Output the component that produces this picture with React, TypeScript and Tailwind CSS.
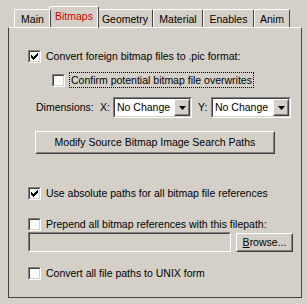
import type { ReactNode } from 'react'

const tabs = ['Main', 'Bitmaps', 'Geometry', 'Material', 'Enables', 'Anim']
const tabWidths = [37, 50, 56, 50, 51, 36]

function CheckBox({ checked }: { checked?: boolean }) {
  return (
    <span className="box-border flex h-[13px] w-[13px] shrink-0 border border-t-[#808080] border-l-[#808080] border-b-white border-r-white">
      <span className="box-border flex flex-1 items-center justify-center border border-t-[#404040] border-l-[#404040] border-b-[#d4d0c8] border-r-[#d4d0c8] bg-white">
        {checked && (
          <svg width="7" height="7" viewBox="0 0 7 7">
            <path d="M0 2h1v1h1v1h1v-1h1v-1h1v-1h1v-1h1v3h-1v1h-1v1h-1v1h-1v1h-1v-1h-1v-1h-1z" fill="#000" />
          </svg>
        )}
      </span>
    </span>
  )
}

function Row({ checked, children, className }: { checked?: boolean; children: ReactNode; className: string }) {
  return (
    <div className={`flex h-[15px] items-center gap-[5px] ${className}`}>
      <CheckBox checked={checked} />
      <span className="whitespace-nowrap">{children}</span>
    </div>
  )
}

function Sunken({ className, children }: { className: string; children?: ReactNode }) {
  return (
    <div className={`box-border flex border border-t-[#808080] border-l-[#808080] border-b-white border-r-white ${className}`}>
      <div className="box-border flex flex-1 items-center border border-t-[#404040] border-l-[#404040] border-b-[#d4d0c8] border-r-[#d4d0c8]">
        {children}
      </div>
    </div>
  )
}

function Raised({ className, children }: { className: string; children?: ReactNode }) {
  return (
    <div className={`box-border flex border border-t-white border-l-white border-b-[#404040] border-r-[#404040] bg-[#d4d0c8] ${className}`}>
      <div className="box-border flex flex-1 items-center justify-center border border-t-[#d4d0c8] border-l-[#d4d0c8] border-b-[#808080] border-r-[#808080]">
        {children}
      </div>
    </div>
  )
}

function Dropdown({ className }: { className: string }) {
  return (
    <Sunken className={`h-[21px] ${className}`}>
      <div className="flex h-full flex-1 items-center bg-white pl-[2px]">No Change</div>
      <Raised className="h-[17px] w-[16px]">
        <svg width="7" height="4" viewBox="0 0 7 4">
          <path d="M0 0h7l-3.5 4z" fill="#000" />
        </svg>
      </Raised>
    </Sunken>
  )
}

export default function App() {
  return (
    <div
      className="h-[304px] w-[307px] overflow-hidden bg-[#d4d0c8] pt-[6px] pl-[8px] text-[10.5px] leading-none text-black"
      style={{ fontFamily: '"Liberation Sans", Arial, sans-serif' }}
    >
      {/* Tabs */}
      <div className="flex h-[21px] items-end pl-[6px]">
        {tabs.map((t, i) => {
          const active = t === 'Bitmaps'
          return (
            <div
              key={t}
              style={{ width: tabWidths[i] }}
              className={`box-border flex items-center justify-center rounded-t-[2px] border-t border-l border-r border-t-white border-l-white border-r-[#404040] ${
                active ? 'relative z-10 -mx-[2px] h-[22px] -mb-px pb-[3px] text-[#d00000]' : 'h-[18px] pt-[1px]'
              }`}
            >
              {t}
            </div>
          )
        })}
      </div>

      {/* Panel */}
      <div className="box-border h-[271px] w-[294px] border border-t-white border-l-[#404040] border-r-[#404040] border-b-[#404040] pl-[19px]">
        <Row checked className="mt-[21px]">
          Convert foreign bitmap files to .pic format:
        </Row>
        <div className="mt-[8px] flex h-[16px] items-center gap-[4px] pl-[24px]">
          <CheckBox />
          <span className="flex h-[16px] items-center border border-dotted border-black px-px whitespace-nowrap">
            Confirm potential bitmap file overwrites
          </span>
        </div>
        <div className="mt-[9px] flex h-[21px] items-center">
          <span className="ml-[8px] w-[64px]">Dimensions:</span>
          <span className="w-[13px]">X:</span>
          <Dropdown className="w-[79px]" />
          <span className="ml-[6px] w-[13px]">Y:</span>
          <Dropdown className="w-[80px]" />
        </div>
        <Raised className="mt-[13px] ml-[7px] h-[23px] w-[240px]">Modify Source Bitmap Image Search Paths</Raised>

        <Row checked className="mt-[32px]">
          Use absolute paths for all bitmap file references
        </Row>
        <Row className="mt-[16px]">Prepend all bitmap references with this filepath:</Row>
        <div className="flex h-[20px] items-center">
          <Sunken className="h-[20px] w-[203px]" />
          <Raised className="ml-[5px] h-[19px] w-[57px]">
            <span>
              <span className="underline">B</span>rowse...
            </span>
          </Raised>
        </div>
        <Row className="mt-[14px]">Convert all file paths to UNIX form</Row>
      </div>
    </div>
  )
}
